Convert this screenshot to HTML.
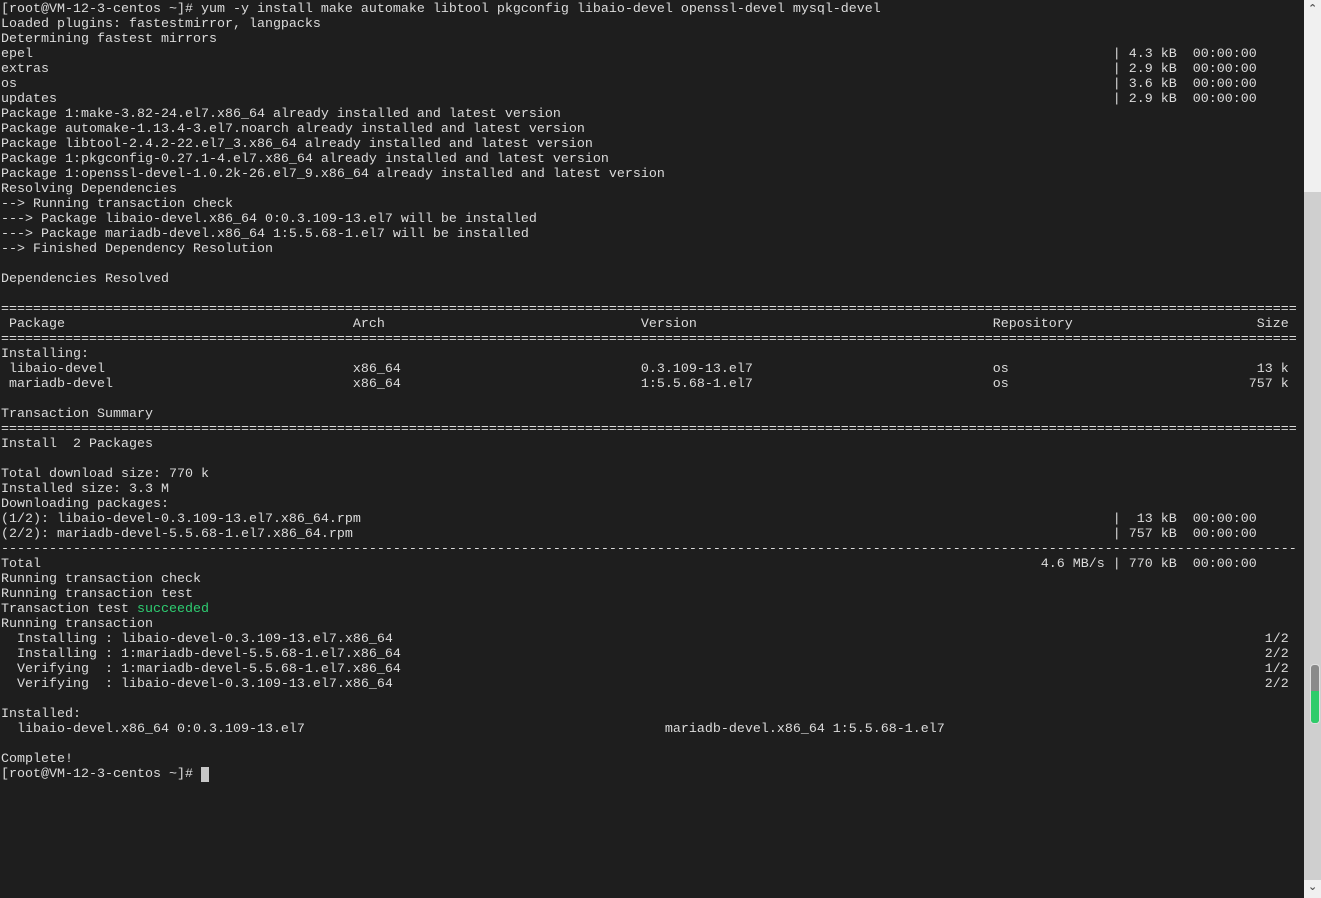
<!DOCTYPE html>
<html><head><meta charset="utf-8"><style>
html,body{margin:0;padding:0;background:#1e1e1e;width:1321px;height:898px;overflow:hidden}
pre{position:absolute;left:1px;top:2px;margin:0;font-family:"Liberation Mono",monospace;font-size:13.33px;line-height:15px;color:#dcdcdc;white-space:pre}
.g{color:#2ecc71}
.cur{background:#c8c8c8;color:#c8c8c8}
#sb{position:absolute;left:1304px;top:0;width:17px;height:898px;background:#cfcfcf}
#sbt{position:absolute;left:0;top:0;width:17px;height:192px;background:#f0f0f0}
#sbb{position:absolute;left:0;bottom:0;width:17px;height:18px;background:#f0f0f0}
#thumb{position:absolute;left:6px;top:664px;width:8px;height:58px;border-radius:4px;background:#8a8a8a;overflow:hidden;border:1px solid #e0e0e0}
#thumb div{position:absolute;left:0;top:26px;width:8px;height:32px;background:#2ecc6a}
.ar{position:absolute;left:4px;font:bold 11px "DejaVu Sans",sans-serif;color:#555}
</style></head><body>
<pre id="t"></pre>
<div id="sb"><div id="sbt"></div><div id="sbb"></div><div id="thumb"><div></div></div>
<div class="ar" style="top:2px">&#8963;</div><div class="ar" style="top:880px">&#8964;</div></div>
<script>
function p(s,n){while(s.length<n)s+=' ';return s}
function esc(s){return s.replace(/&/g,'&amp;').replace(/</g,'&lt;').replace(/>/g,'&gt;')}
var L=[];
L.push('[root@VM-12-3-centos ~]# yum -y install make automake libtool pkgconfig libaio-devel openssl-devel mysql-devel');
L.push('Loaded plugins: fastestmirror, langpacks');
L.push('Determining fastest mirrors');
[['epel','4.3'],['extras','2.9'],['os','3.6'],['updates','2.9']].forEach(function(a){L.push(p(a[0],139)+'| '+a[1]+' kB  00:00:00')});
L.push('Package 1:make-3.82-24.el7.x86_64 already installed and latest version');
L.push('Package automake-1.13.4-3.el7.noarch already installed and latest version');
L.push('Package libtool-2.4.2-22.el7_3.x86_64 already installed and latest version');
L.push('Package 1:pkgconfig-0.27.1-4.el7.x86_64 already installed and latest version');
L.push('Package 1:openssl-devel-1.0.2k-26.el7_9.x86_64 already installed and latest version');
L.push('Resolving Dependencies');
L.push('--> Running transaction check');
L.push('---> Package libaio-devel.x86_64 0:0.3.109-13.el7 will be installed');
L.push('---> Package mariadb-devel.x86_64 1:5.5.68-1.el7 will be installed');
L.push('--> Finished Dependency Resolution');
L.push('');
L.push('Dependencies Resolved');
L.push('');
var EQ=Array(163).join('='),DS=Array(163).join('-');
L.push(EQ);
L.push(p(p(p(p(' Package',44)+'Arch',80)+'Version',124)+'Repository',157)+'Size');
L.push(EQ);
L.push('Installing:');
L.push(p(p(p(p(' libaio-devel',44)+'x86_64',80)+'0.3.109-13.el7',124)+'os',157)+'13 k');
L.push(p(p(p(p(' mariadb-devel',44)+'x86_64',80)+'1:5.5.68-1.el7',124)+'os',156)+'757 k');
L.push('');
L.push('Transaction Summary');
L.push(EQ);
L.push('Install  2 Packages');
L.push('');
L.push('Total download size: 770 k');
L.push('Installed size: 3.3 M');
L.push('Downloading packages:');
L.push(p('(1/2): libaio-devel-0.3.109-13.el7.x86_64.rpm',139)+'|  13 kB  00:00:00');
L.push(p('(2/2): mariadb-devel-5.5.68-1.el7.x86_64.rpm',139)+'| 757 kB  00:00:00');
L.push(DS);
L.push(p(p('Total',130)+'4.6 MB/s ',139)+'| 770 kB  00:00:00');
L.push('Running transaction check');
L.push('Running transaction test');
L.push('@@SUCC');
L.push('Running transaction');
L.push(p('  Installing : libaio-devel-0.3.109-13.el7.x86_64',158)+'1/2');
L.push(p('  Installing : 1:mariadb-devel-5.5.68-1.el7.x86_64',158)+'2/2');
L.push(p('  Verifying  : 1:mariadb-devel-5.5.68-1.el7.x86_64',158)+'1/2');
L.push(p('  Verifying  : libaio-devel-0.3.109-13.el7.x86_64',158)+'2/2');
L.push('');
L.push('Installed:');
L.push(p('  libaio-devel.x86_64 0:0.3.109-13.el7',83)+'mariadb-devel.x86_64 1:5.5.68-1.el7');
L.push('');
L.push('Complete!');
L.push('@@PROMPT');
var h=L.map(function(s){
 if(s=='@@SUCC')return 'Transaction test <span class="g">succeeded</span>';
 if(s=='@@PROMPT')return '[root@VM-12-3-centos ~]# <span class="cur">_</span>';
 return esc(s)}).join('\n');
document.getElementById('t').innerHTML=h;
</script>
</body></html>
